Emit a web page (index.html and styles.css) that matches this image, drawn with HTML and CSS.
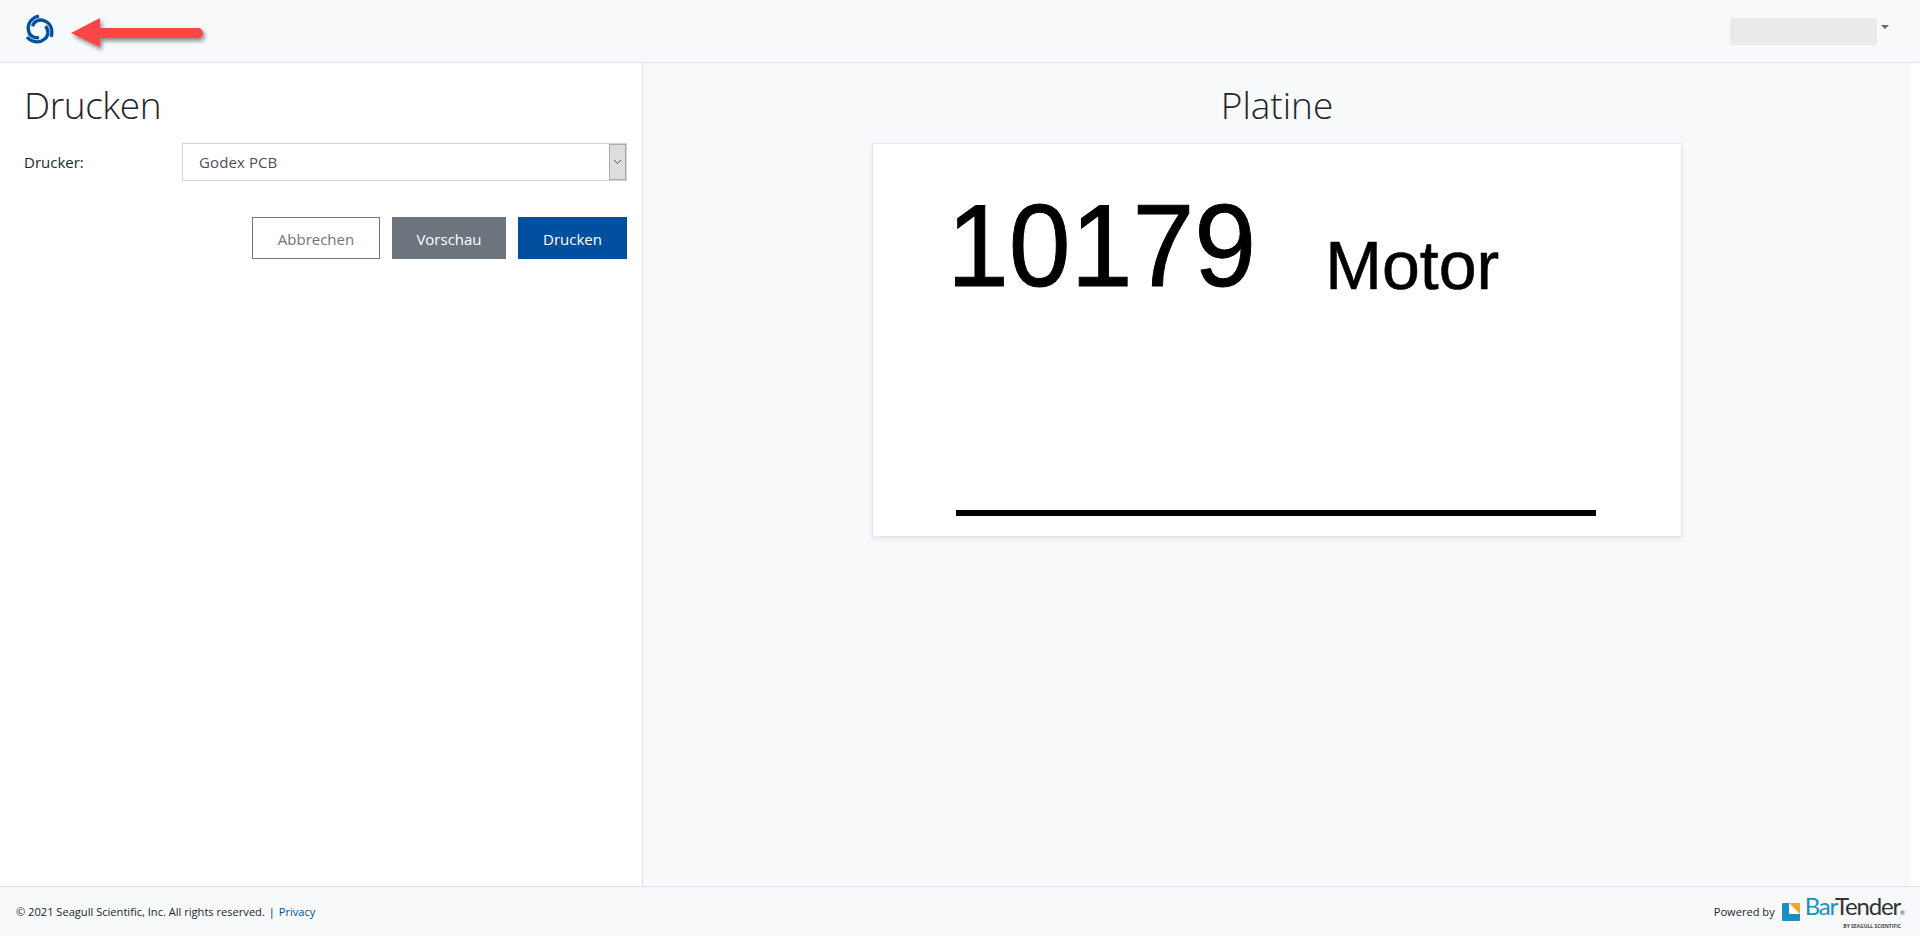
FILE: index.html
```html
<!DOCTYPE html>
<html lang="de">
<head>
    <meta charset="UTF-8">
    <meta name="viewport" content="width=device-width, initial-scale=1.0">
    <title>Drucken</title>
    <link rel="stylesheet" href="styles.css">
</head>
<body>
    <header class="topbar">
        <a class="logo" href="#">
            <svg width="34" height="34" viewBox="0 0 32 32" fill="none" stroke="#0050a0" stroke-width="3.100">
                <path d="M9.940 12.500A8 8 0 0 1 21 7.340A11 11 0 0 1 28 16A13 13 0 0 1 27.300 22.500"/>
                <path d="M9.940 12.500A8 8 0 0 1 21 7.340A11 11 0 0 1 28 16A13 13 0 0 1 27.300 22.500" transform="rotate(120 16 16)"/>
                <path d="M9.940 12.500A8 8 0 0 1 21 7.340A11 11 0 0 1 28 16A13 13 0 0 1 27.300 22.500" transform="rotate(240 16 16)"/>
            </svg>
        </a>
        <div class="user-menu">
            <div class="user-name"></div>
            <span class="caret"></span>
        </div>
        <svg class="arrow" width="160" height="50" viewBox="0 0 160 50">
            <path class="arrow-shadow" d="M13 22L42 7V17H140a5 5 0 0 1 0 10H42V36Z"/>
            <path class="arrow-body" d="M11 19L40 4V14H138a5 5 0 0 1 0 10H40V33Z"/>
        </svg>
    </header>

    <main class="content">
        <section class="print-panel">
            <h1>Drucken</h1>
            <form>
                <div class="form-row">
                    <label for="printer">Drucker:</label>
                    <div class="select-box" id="printer">
                        <span class="select-value">Godex PCB</span>
                        <span class="select-btn">
                            <svg width="9" height="6" viewBox="0 0 9 6" fill="none" stroke="#555" stroke-width="1">
                                <path d="M1 1l3.500 3.500L8 1"/>
                            </svg>
                        </span>
                    </div>
                </div>
                <div class="form-buttons">
                    <button type="button" class="btn btn-cancel">Abbrechen</button>
                    <button type="button" class="btn btn-preview">Vorschau</button>
                    <button type="button" class="btn btn-print">Drucken</button>
                </div>
            </form>
        </section>

        <section class="preview-panel">
            <h2>Platine</h2>
            <div class="label-card">
                <div class="label-text">
                    <span class="label-number">10179</span>
                    <span class="label-name">Motor</span>
                </div>
                <div class="label-line"></div>
            </div>
        </section>
    </main>

    <footer class="footer">
        <p>© 2021 Seagull Scientific, Inc. All rights reserved. <span class="sep">|</span> <a href="#">Privacy</a></p>
        <div class="powered">
            <span>Powered by</span>
            <svg class="bt-icon" width="18" height="18" viewBox="0 0 18 18">
                <rect width="18" height="18" rx="1" fill="#1b8fc4"/>
                <path d="M7 0H18V11H7Z" fill="#fff"/>
                <path d="M7 0H18V11Z" fill="#f5a623"/>
            </svg>
            <div class="bt-brand">
                <div class="bt-name"><span class="bt-bar">Bar</span>Tender<span class="bt-reg">®</span></div>
                <div class="bt-sub">BY SEAGULL SCIENTIFIC</div>
            </div>
        </div>
    </footer>
</body>
</html>
```

FILE: styles.css
```css
/* Style général */
* {
    box-sizing: border-box;
}

body {
    margin: 0;
    display: flex;
    flex-direction: column;
    height: 936px;
    overflow: hidden;
    font-family: "Open Sans", "Noto Sans", Arial, sans-serif;
    background-color: #f8f9fb;
    color: #212529;
}

.topbar {
    position: relative;
    display: flex;
    align-items: center;
    justify-content: space-between;
    height: 63px;
    padding: 0 31px 0 22px;
    border-bottom: 1px solid #dee2e6;
}

.logo {
    display: flex;
    margin-bottom: 2px;
}

.arrow {
    position: absolute;
    left: 60px;
    top: 14px;
}

.arrow-body {
    fill: #ff4545;
}

.arrow-shadow {
    fill: rgba(0, 0, 0, 0.45);
    filter: blur(2px);
}

.user-menu {
    display: flex;
    align-items: flex-start;
    gap: 4px;
}

.user-name {
    width: 147px;
    height: 27px;
    background-color: #e9eaeb;
}

.caret {
    margin-top: 7px;
    border-top: 4px solid #666;
    border-left: 4px solid transparent;
    border-right: 4px solid transparent;
}

.content {
    flex: 1;
    display: flex;
    min-height: 0;
    background-color: #fff;
}

.print-panel {
    width: 643px;
    padding: 0 15px 0 24px;
    border-right: 1px solid #dee2e6;
}

h1, h2 {
    margin: 0;
    font-size: 37px;
    font-weight: 300;
    line-height: 48px;
}

h1 {
    margin-top: 18px;
    letter-spacing: -0.4px;
}

h2 {
    margin-top: -1px;
}

.form-row {
    display: flex;
    align-items: center;
    margin-top: 14px;
    font-size: 15px;
}

.form-row label {
    width: 158px;
}

.select-box {
    flex: 1;
    display: flex;
    justify-content: space-between;
    height: 38px;
    border: 1px solid #ced4da;
    background-color: #fff;
}

.select-value {
    padding-left: 16px;
    line-height: 37px;
    letter-spacing: 0.1px;
    color: #495057;
}

.select-btn {
    display: flex;
    align-items: center;
    justify-content: center;
    width: 17px;
    background-color: #ddd;
    border: 1px solid #aaa;
}

.form-buttons {
    display: flex;
    justify-content: flex-end;
    gap: 12px;
    margin-top: 36px;
}

.btn {
    height: 42px;
    padding: 1px 0 0;
    border: 1px solid transparent;
    font-family: inherit;
    font-size: 15px;
    cursor: pointer;
}

.btn-cancel {
    width: 128px;
    background-color: #fff;
    border-color: #6c757d;
    color: #6c757d;
}

.btn-preview {
    width: 114px;
    background-color: #6c757d;
    color: #fff;
}

.btn-print {
    width: 109px;
    background-color: #0050a0;
    color: #fff;
}

.preview-panel {
    flex: 1;
    display: flex;
    flex-direction: column;
    align-items: center;
    margin-right: 9px;
    padding-top: 19px;
    background-color: #f8f9fb;
}

.label-card {
    display: flex;
    flex-direction: column;
    justify-content: space-between;
    width: 810px;
    height: 394px;
    margin-top: 14px;
    padding: 0 0 20px 74px;
    background-color: #fff;
    border: 1px solid #e3e6ea;
    box-shadow: 0 2px 5px rgba(0, 0, 0, 0.08);
    font-family: "Liberation Sans", Arial, sans-serif;
    color: #000;
}

.label-text {
    display: flex;
    align-items: flex-start;
}

.label-number {
    margin-top: 43px;
    font-size: 117px;
    line-height: 117px;
    -webkit-text-stroke: 1px #000;
    transform: scaleX(0.95);
    transform-origin: left;
}

.label-name {
    margin-top: 87px;
    margin-left: 53px;
    font-size: 68px;
    line-height: 68px;
    -webkit-text-stroke: 0.6px #000;
}

.label-line {
    width: 640px;
    height: 6px;
    margin-left: 9px;
    background-color: #000;
}

.footer {
    display: flex;
    align-items: center;
    justify-content: space-between;
    height: 50px;
    padding: 0 15px 0 16px;
    border-top: 1px solid #dee2e6;
    font-size: 11.1px;
}

.footer p {
    margin: 0;
}

.sep {
    margin: 0 1px;
}

.footer a {
    color: #0050a0;
    text-decoration: none;
}

.powered {
    display: flex;
    align-items: center;
}

.bt-icon {
    margin: 0 5px 0 7px;
}

.bt-name {
    font-family: Lato, "Open Sans", sans-serif;
    font-size: 24px;
    line-height: 22px;
    letter-spacing: -1.2px;
    color: #333;
}

.bt-bar {
    color: #1b8fc4;
}

.bt-reg {
    font-size: 6px;
    letter-spacing: 0;
}

.bt-sub {
    font-size: 5px;
    font-weight: 700;
    line-height: 5px;
    text-align: right;
    padding-right: 4px;
    color: #444;
}
```
